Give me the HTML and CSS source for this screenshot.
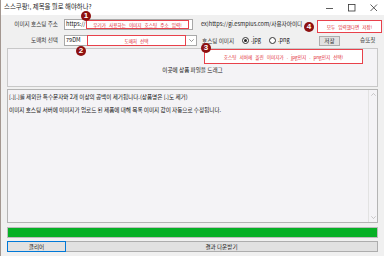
FILE: index.html
```html
<!DOCTYPE html>
<html>
<head>
    <title>스스쿠팡!</title>
    <meta charset="utf-8">
    <link rel="stylesheet" href="styles.css">
</head>
<body>
    <div class="window">
        <div class="titlebar">
            <span class="title">스스쿠팡!, 제목을 뭘로 해야하나?</span>
            <div class="controls">
                <svg width="8" height="8" viewBox="0 0 8 8"><path d="M0 4.5h7" stroke="#333" stroke-width="0.8"/></svg>
                <svg width="8" height="8" viewBox="0 0 8 8"><rect x="0.5" y="0.5" width="6.5" height="6.5" fill="none" stroke="#333" stroke-width="0.8"/></svg>
                <svg width="8" height="8" viewBox="0 0 8 8"><path d="M0.5 0.5l6.5 6.5M7 0.5l-6.5 6.5" stroke="#333" stroke-width="0.8"/></svg>
            </div>
        </div>

        <div class="content">
            <div class="row row-host">
                <label class="field-label">이미지 호스팅 주소</label>
                <div class="url-box">
                    <span class="prefix">https://</span>
                    <span class="note note-host">우리가 사용하는 이미지 호스팅 주소 입력!</span>
                </div>
                <span class="example">ex)https://gi.esmplus.com/사용자아이디</span>
            </div>

            <div class="row row-shop">
                <label class="field-label">도매처 선택</label>
                <div class="combo">
                    <span class="combo-value">79DM</span>
                    <span class="note note-shop">도매처 선택</span>
                    <span class="combo-arrow">
                        <svg width="5" height="3" viewBox="0 0 5 3"><path d="M0.3 0.3l2.2 2.2 2.2-2.2" fill="none" stroke="#555" stroke-width="0.6"/></svg>
                    </span>
                </div>
                <span class="img-label">호스팅 이미지</span>
                <span class="radio"><span class="dot checked"></span>.jpg</span>
                <span class="radio"><span class="dot"></span>.png</span>
                <button class="btn save">저장</button>
                <span class="status">승또칫</span>
            </div>

            <div class="drop">이곳에 상품 파일을 드래그</div>

            <div class="log">
                <div class="log-text">
                    <p>[.][.]를 제외한 특수문자와 2개 이상의 공백이 제거됩니다.(상품명은 [.]도 제거)</p>
                    <p>이미지 호스팅 서버에 이미지가 업로드 된 제품에 대해 목록 이미지 값이 자동으로 수정됩니다.</p>
                </div>
                <div class="scrollbar">
                    <svg width="5" height="3" viewBox="0 0 5 3"><path d="M0.3 2.7l2.2-2.2 2.2 2.2" fill="none" stroke="#aaa" stroke-width="0.6"/></svg>
                    <svg width="5" height="3" viewBox="0 0 5 3"><path d="M0.3 0.3l2.2 2.2 2.2-2.2" fill="none" stroke="#aaa" stroke-width="0.6"/></svg>
                </div>
            </div>

            <div class="progress"><div class="progress-fill" style="width:100%"></div></div>

            <div class="actions">
                <button class="btn clear">클리어</button>
                <button class="btn download">결과 다운받기</button>
            </div>
        </div>

        <!-- annotations drawn over the form -->
        <span class="note note-type">호스팅 서버에 올린 이미지가 . jpg인지 . png인지 선택!</span>
        <span class="note note-save">모두 입력했다면 저장!</span>
        <span class="badge badge-1">1</span>
        <span class="badge badge-2">2</span>
        <span class="badge badge-3">3</span>
        <span class="badge badge-4">4</span>
    </div>
</body>
</html>
```

FILE: styles.css
```css
html, body {
    margin: 0;
    padding: 0;
}
body {
    font-family: "Noto Sans CJK KR", "Noto Sans", sans-serif;
    font-size: 5.6px;
    color: #111;
}
.window {
    position: relative;
    width: 383px;
    height: 256px;
    background: #f0f0f0;
    border-left: 1px solid #a39790;
    overflow: hidden;
}

.titlebar {
    height: 15px;
    background: #fff;
    display: flex;
    align-items: center;
    justify-content: space-between;
}
.title {
    font-size: 6.4px;
    line-height: 6px;
    margin-left: 3px;
    margin-bottom: 1px;
    color: #222;
}
.controls {
    display: flex;
    align-items: center;
    gap: 14px;
    margin-right: 6px;
}

.content {
    padding-top: 4px;
}
.row {
    display: flex;
    align-items: center;
    height: 11px;
    line-height: 7px;
}
.row-shop {
    margin-top: 5px;
}
.field-label {
    width: 52px;
    margin-left: 5px;
    margin-right: 6px;
    text-align: right;
    color: #333;
}

.url-box {
    width: 127px;
    height: 9px;
    border: 1px solid #a8a8a8;
    background: #fff;
    display: flex;
    align-items: center;
}
.prefix {
    width: 20px;
    padding-left: 1px;
}
.example {
    margin-left: 8px;
    color: #222;
}

.note {
    border: 1px solid #e8414b;
    color: #e0242e;
    background: #fff;
    font-size: 4.6px;
    line-height: 6px;
    display: flex;
    align-items: center;
    justify-content: center;
    box-sizing: border-box;
    white-space: nowrap;
    word-spacing: 2px;
}
.note-host {
    width: 103px;
    height: 9px;
}

.combo {
    width: 131px;
    height: 9px;
    border: 1px solid #a8a8a8;
    background: #fff;
    display: flex;
    align-items: center;
}
.combo-value {
    width: 21px;
    padding-left: 1px;
}
.note-shop {
    width: 99px;
    height: 11px;
}
.combo-arrow {
    flex: 1;
    display: flex;
    justify-content: center;
    align-items: center;
}

.img-label {
    margin-left: 5px;
    width: 38px;
    color: #333;
    line-height: 6px;
}
.radio {
    display: flex;
    align-items: center;
    gap: 2px;
    width: 25px;
    margin-left: 2px;
}
.dot {
    width: 5px;
    height: 5px;
    border: 1px solid #333;
    border-radius: 50%;
    background: #fff;
    position: relative;
}
.dot.checked::after {
    content: "";
    position: absolute;
    left: 1px;
    top: 1px;
    width: 3px;
    height: 3px;
    border-radius: 50%;
    background: #222;
}

.btn {
    font-family: inherit;
    font-size: 5.6px;
    color: #222;
    background: #e1e1e1;
    border: 1px solid #adadad;
    padding: 0;
    margin: 0;
}
.save {
    width: 21px;
    height: 10px;
    margin-left: 25px;
}
.status {
    margin-left: 20px;
    color: #333;
}

.drop {
    margin: 2px 6px 0;
    border: 1px solid #c8c8c8;
    background: #f4f3f6;
    display: flex;
    justify-content: center;
    align-items: center;
    padding-top: 4px;
    height: 33px;
}

.log {
    margin: 2px 6px 0;
    height: 132px;
    border: 1px solid #b4b4b4;
    background: #f4f3f6;
    display: flex;
}
.log-text {
    flex: 1;
    padding: 1px 1px;
    line-height: 13px;
}
.log-text p {
    margin: 0;
}
.scrollbar {
    width: 8px;
    border-left: 1px solid #e2e2e2;
    display: flex;
    flex-direction: column;
    justify-content: space-between;
    align-items: center;
    padding: 3px 0;
}

.progress {
    margin: 4px 6px 0;
    height: 9px;
    border: 1px solid #bcbcbc;
    background: #e6e6e6;
}
.progress-fill {
    height: 100%;
    background: #06b025;
}

.actions {
    margin: 3px 6px 0;
    display: flex;
    height: 11px;
}
.clear {
    width: 59px;
    height: 11px;
    border-color: #0078d7;
}
.download {
    flex: 1;
    height: 11px;
    border-left: none;
}

.note-type {
    position: absolute;
    left: 203px;
    top: 49px;
    width: 159px;
    height: 15px;
}
.note-save {
    position: absolute;
    left: 316px;
    top: 20px;
    width: 65px;
    height: 13px;
}

.badge {
    position: absolute;
    width: 10px;
    height: 10px;
    border-radius: 50%;
    background: #8e1010;
    color: #fff;
    font-family: "Liberation Sans", sans-serif;
    font-weight: bold;
    font-size: 8px;
    line-height: 10px;
    text-align: center;
}
.badge-1 { left: 80px; top: 11px; }
.badge-2 { left: 75px; top: 46px; }
.badge-3 { left: 200px; top: 43px; }
.badge-4 { left: 303px; top: 22px; }
```
